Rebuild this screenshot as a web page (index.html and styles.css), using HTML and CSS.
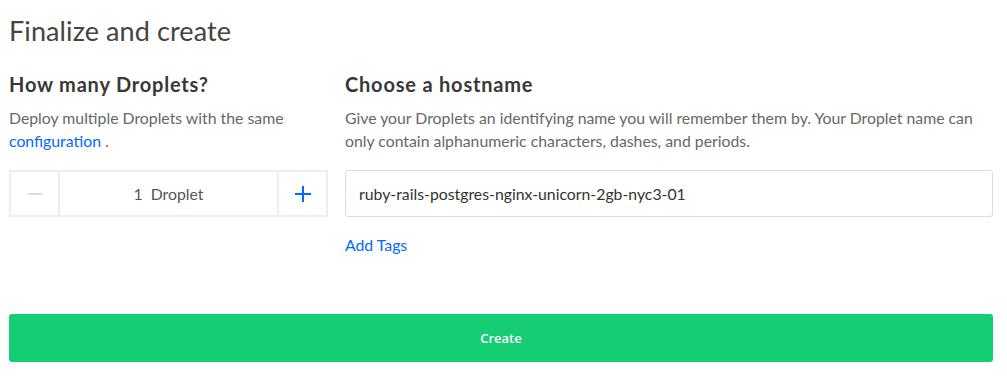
FILE: index.html
```html
<!DOCTYPE html>
<html lang="en">
<head>
    <meta charset="UTF-8">
    <title>Finalize and create</title>
    <link rel="stylesheet" href="styles.css">
</head>
<body>
<div class="finalize">
    <h1>Finalize and create</h1>
    <div class="columns">
        <div class="col-count">
            <h3>How many Droplets?</h3>
            <p class="hint">Deploy multiple Droplets with the same <a href="#">configuration</a> .</p>
            <div class="stepper">
                <button class="step step-minus" type="button">
                    <svg width="14" height="14" viewBox="0 0 14 14"><path d="M0 7h14" stroke="#dcdcdc" stroke-width="2"/></svg>
                </button>
                <div class="step-value">1&nbsp; Droplet</div>
                <button class="step step-plus" type="button">
                    <svg width="16" height="16" viewBox="0 0 16 16"><path d="M0 8h16M8 0v16" stroke="#0069ff" stroke-width="2"/></svg>
                </button>
            </div>
        </div>
        <div class="col-host">
            <h3>Choose a hostname</h3>
            <p class="hint">Give your Droplets an identifying name you will remember them by. Your Droplet name can only contain alphanumeric characters, dashes, and periods.</p>
            <input class="host-input" type="text" value="ruby-rails-postgres-nginx-unicorn-2gb-nyc3-01">
            <div class="tags-link"><a href="#">Add Tags</a></div>
        </div>
    </div>
    <button class="create-btn" type="button">Create</button>
</div>
</body>
</html>
```
FILE: styles.css
```css
* {
    margin: 0;
    padding: 0;
    box-sizing: border-box;
}

body {
    font-family: Lato, "Liberation Sans", sans-serif;
    background: #fff;
    color: #444;
}

.finalize {
    padding: 14px 14px 0 9px;
}

h1 {
    font-size: 27px;
    font-weight: 400;
    color: #444;
    line-height: 34px;
    letter-spacing: 0.1px;
}

.columns {
    display: flex;
    gap: 17px;
    margin-top: 24px;
}

.col-count {
    width: 319px;
    flex-shrink: 0;
}

.col-host {
    flex: 1;
}

h3 {
    font-size: 20px;
    font-weight: 700;
    color: #383838;
    line-height: 24px;
    letter-spacing: 0.8px;
}

.hint {
    font-size: 15.8px;
    line-height: 23px;
    color: #676767;
    margin-top: 10px;
}

a {
    color: #0069ff;
    text-decoration: none;
}

.stepper {
    display: flex;
    height: 47px;
    margin-top: 18px;
    border: 2px solid #eeeeee;
}

.step {
    width: 49px;
    border: none;
    background: #fff;
    display: flex;
    align-items: center;
    justify-content: center;
}

.step-minus {
    border-right: 2px solid #eeeeee;
}

.step-plus {
    border-left: 2px solid #eeeeee;
}

.step-value {
    flex: 1;
    display: flex;
    align-items: center;
    justify-content: center;
    font-size: 15.8px;
    color: #555;
}

.host-input {
    display: block;
    width: 100%;
    height: 47px;
    margin-top: 18px;
    padding: 0 13px;
    border: 1px solid #dddddd;
    border-radius: 3px;
    font-family: Lato, "Liberation Sans", sans-serif;
    font-size: 15.8px;
    color: #333;
}

.tags-link {
    margin-top: 18px;
    font-size: 15.8px;
    line-height: 20px;
}

.create-btn {
    display: block;
    width: 100%;
    height: 48px;
    margin-top: 59px;
    border: none;
    border-radius: 3px;
    background: #15cd72;
    color: #fff;
    font-family: "Open Sans", sans-serif;
    font-size: 13px;
    font-weight: 600;
}
```
